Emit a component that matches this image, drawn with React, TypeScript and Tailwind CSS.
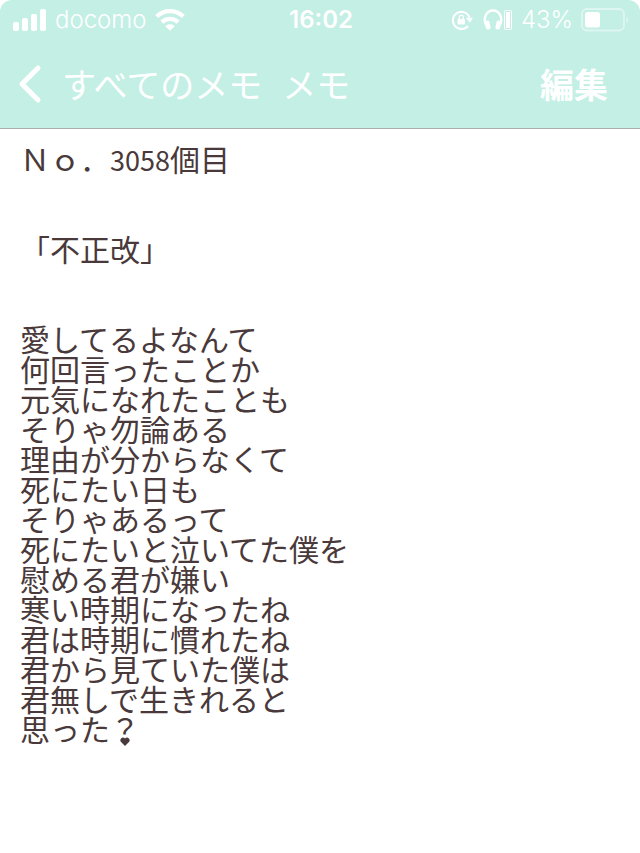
const MEMO_LINES = [
  "愛してるよなんて",
  "何回言ったことか",
  "元気になれたことも",
  "そりゃ勿論ある",
  "理由が分からなくて",
  "死にたい日も",
  "そりゃあるって",
  "死にたいと泣いてた僕を",
  "慰める君が嫌い",
  "寒い時期になったね",
  "君は時期に慣れたね",
  "君から見ていた僕は",
  "君無しで生きれると",
];

function SignalIcon() {
  return (
    <svg width="34" height="22" viewBox="0 0 34 22" fill="currentColor" aria-hidden="true">
      <rect x="0" y="13" width="6" height="9" rx="2" />
      <rect x="9" y="9" width="6" height="13" rx="2" />
      <rect x="18" y="5" width="6" height="17" rx="2" />
      <rect x="27" y="0" width="6" height="22" rx="2" />
    </svg>
  );
}

function WifiIcon() {
  return (
    <svg width="30" height="22" viewBox="0 0 30 22" fill="none" stroke="currentColor" aria-hidden="true">
      <path d="M1.7 7.6C9.2.4 20.8.4 28.3 7.6" strokeWidth="4.2" />
      <path d="M6.8 13.1c4.7-4.4 11.7-4.4 16.4 0" strokeWidth="4.2" />
      <path d="M10.3 17.2c2.7-2.5 6.7-2.5 9.4 0L15 21.8z" fill="currentColor" stroke="none" />
    </svg>
  );
}

function RotationLockIcon() {
  return (
    <svg width="22" height="22" viewBox="0 0 22 22" fill="none" stroke="currentColor" aria-hidden="true">
      <path d="M17 17A8.6 8.6 0 1 1 18.6 8.5" strokeWidth="2" />
      <path d="M14.8 8.8h7L19 13.8z" fill="currentColor" stroke="none" />
      <rect x="6.6" y="10" width="7.4" height="5.6" rx="1" fill="currentColor" stroke="none" />
      <path d="M8.3 10.5V8.2a2 2 0 0 1 4 0v2.3" strokeWidth="1.4" />
    </svg>
  );
}

function HeadphonesIcon() {
  return (
    <svg width="30" height="22" viewBox="0 0 30 22" fill="none" stroke="currentColor" aria-hidden="true">
      <path d="M3.6 17C-.8 9.4 3.4 1.5 10 1.5S20.8 9.4 16.4 17" strokeWidth="2.4" />
      <rect x="2.4" y="11.5" width="4.6" height="9" rx="1.8" fill="currentColor" stroke="none" transform="rotate(-12 4.6 16)" />
      <rect x="13" y="11.5" width="4.6" height="9" rx="1.8" fill="currentColor" stroke="none" transform="rotate(12 15.4 16)" />
      <rect x="21.5" y="1.5" width="7" height="19" rx="1" strokeWidth="1" />
      <rect x="23" y="3" width="4" height="16" fill="currentColor" stroke="none" />
    </svg>
  );
}

function BatteryIcon() {
  return (
    <svg width="48" height="24" viewBox="0 0 48 24" fill="none" aria-hidden="true">
      <rect x="1" y="1" width="42" height="21.5" rx="5" stroke="currentColor" strokeWidth="1.8" opacity="0.45" />
      <rect x="4" y="4" width="15" height="15.5" rx="2.5" fill="currentColor" />
      <path d="M45.5 8.5c2 1.2 2 5.4 0 6.6z" fill="currentColor" opacity="0.45" />
    </svg>
  );
}

function StatusBar() {
  return (
    <div className="grid h-10 grid-cols-[1fr_auto_1fr] items-center pr-[11px] pl-[13px] font-['Inter',sans-serif] text-2xl leading-10">
      <div className="flex items-center gap-2">
        <SignalIcon />
        <span className="font-light">docomo</span>
        <WifiIcon />
      </div>
      <time className="font-semibold">16:02</time>
      <div className="flex items-center justify-end gap-2">
        <div className="flex gap-2.5">
          <RotationLockIcon />
          <HeadphonesIcon />
        </div>
        <span className="font-light">43%</span>
        <BatteryIcon />
      </div>
    </div>
  );
}

export default function App() {
  return (
    <div className="min-h-screen bg-white font-['Noto_Sans_CJK_JP',sans-serif] text-[#49393a]" lang="ja">
      <header className="rounded-t-xl border-b border-[#a9aeac] bg-[#c4efe5] text-white">
        <StatusBar />
        <nav className="flex h-22 items-center justify-between pr-8 pl-[18px]">
          <button type="button" className="flex items-center gap-5 text-[34px] leading-10 font-normal">
            <svg width="24" height="40" viewBox="0 0 24 40" fill="none" stroke="currentColor" strokeWidth="5" strokeLinecap="round" strokeLinejoin="round" aria-hidden="true">
              <path d="M20 4 4 20l16 16" />
            </svg>
            <span>すべてのメモ</span>
            <span>メモ</span>
          </button>
          <button type="button" className="text-[34px] leading-10 font-bold">編集</button>
        </nav>
      </header>

      <main className="px-5 py-3.5 text-[30px] leading-[30px]">
        <h1>
          Ｎｏ．<span className="text-[27px] leading-none">3058</span>個目
        </h1>
        <h2 className="my-[60px]">「不正改」</h2>
        {MEMO_LINES.map((line) => (
          <p key={line}>{line}</p>
        ))}
        <p>
          思った
          <span className="relative">
            ？
            {/* heart in place of the question mark's dot */}
            <svg className="absolute bottom-1 left-2.5 bg-white" width="10" height="9" viewBox="0 0 10 9" fill="currentColor" aria-hidden="true">
              <path d="M5 9 .8 4.8C-1 2.4 2.6-1.400 5 1.500c2.400-2.900 6 .9 4.200 3.300z" />
            </svg>
          </span>
        </p>
      </main>
    </div>
  );
}
